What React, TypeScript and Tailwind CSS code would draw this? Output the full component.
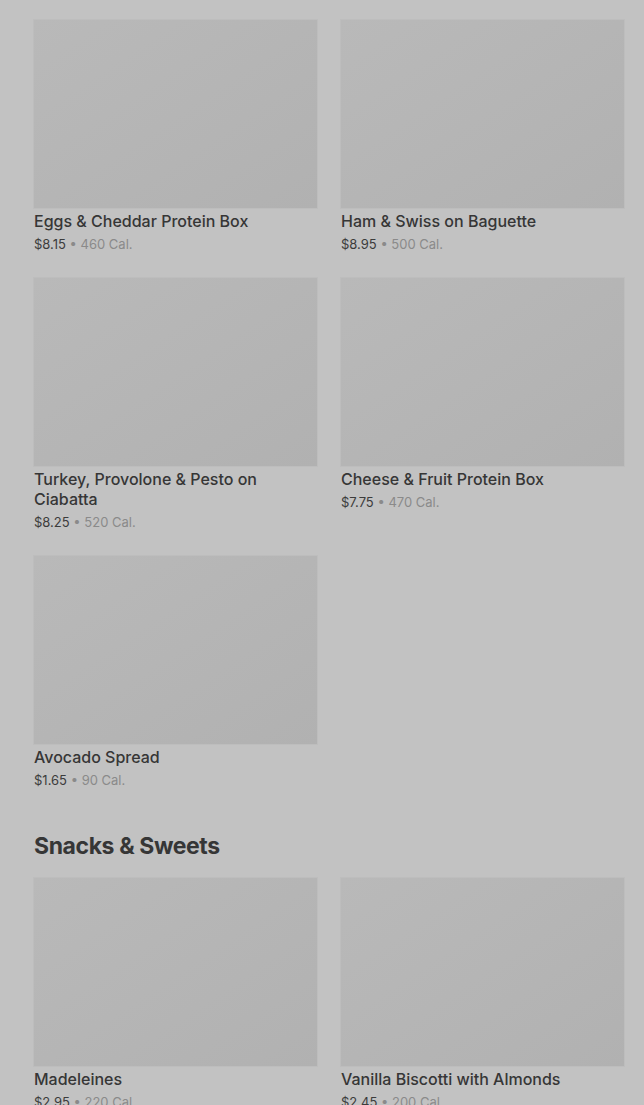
import React from 'react';

interface Item {
  name: string;
  price: string;
  cal: string;
}

const breakfast: Item[] = [
  { name: 'Eggs & Cheddar Protein Box', price: '$8.15', cal: '460 Cal.' },
  { name: 'Ham & Swiss on Baguette', price: '$8.95', cal: '500 Cal.' },
  { name: 'Turkey, Provolone & Pesto on Ciabatta', price: '$8.25', cal: '520 Cal.' },
  { name: 'Cheese & Fruit Protein Box', price: '$7.75', cal: '470 Cal.' },
  { name: 'Avocado Spread', price: '$1.65', cal: '90 Cal.' },
];

const snacks: Item[] = [
  { name: 'Madeleines', price: '$2.95', cal: '220 Cal.' },
  { name: 'Vanilla Biscotti with Almonds', price: '$2.45', cal: '200 Cal.' },
];

function ItemCard({ item }: { item: Item }) {
  return (
    <div className="flex flex-col">
      <div className="h-[188px] w-full bg-gradient-to-br from-[#b9b9b9] to-[#b1b1b1] shadow-[0_0_0_1px_#bdbdbd]" />
      <div className="pt-[3px] text-[16px] leading-5 font-medium text-[#363636] pr-6">{item.name}</div>
      <div className="mt-1 text-[13px] leading-[18px] text-[#3c3c3c]">
        {item.price}
        <span className="text-[#8a8a8a]"> • {item.cal}</span>
      </div>
    </div>
  );
}

export default function App() {
  return (
    <div className="min-h-[1105px] h-[1105px] overflow-hidden bg-[#c2c2c2] pl-[34px] pr-5 pt-5" style={{ fontFamily: 'Inter, "Noto Sans", sans-serif' }}>
      <div className="grid grid-cols-2 gap-x-6 gap-y-[25px]">
        {breakfast.map((it) => (
          <ItemCard key={it.name} item={it} />
        ))}
      </div>
      <h2 className="mt-[41px] text-[23px] leading-8 font-bold tracking-[-0.4px] text-[#363636]">Snacks &amp; Sweets</h2>
      <div className="mt-[16px] grid grid-cols-2 gap-x-6 gap-y-[25px]">
        {snacks.map((it) => (
          <ItemCard key={it.name} item={it} />
        ))}
      </div>
    </div>
  );
}
